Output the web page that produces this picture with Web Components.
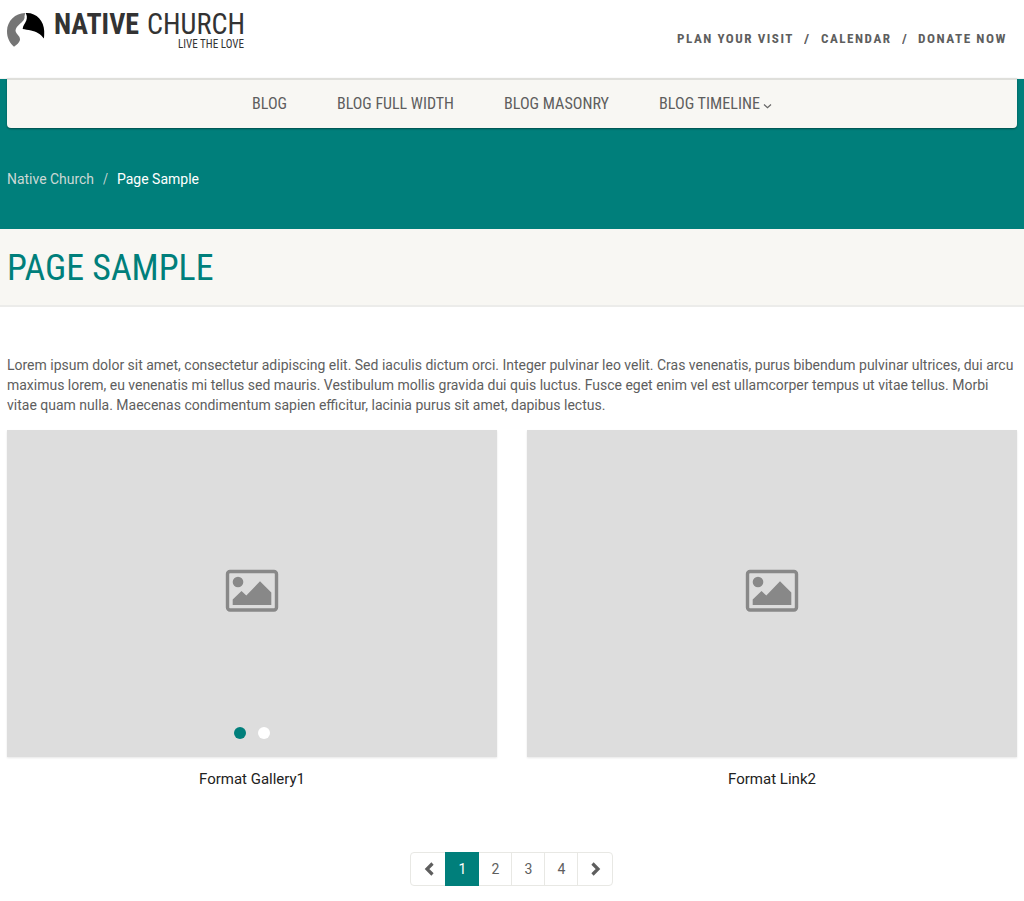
<!DOCTYPE html>
<html lang="en">
<head>
<meta charset="utf-8">
<title>Native Church</title>
<style>
body { margin: 0; background: #fff; color: #5e5e5e; font: 14px/20px Roboto, "Liberation Sans", sans-serif; overflow: hidden; }
</style>
</head>
<body>
<church-page></church-page>
<script>
function define(name, html, setup) {
  const template = document.createElement('template');
  template.innerHTML = html;
  customElements.define(name, class extends HTMLElement {
    connectedCallback() {
      if (this.shadowRoot) return;
      this.attachShadow({ mode: 'open' }).append(template.content.cloneNode(true));
      if (setup) setup(this, this.shadowRoot);
    }
  });
}

/* A single line whose glyphs are condensed to the width given in "w". */
define('fit-text', `
<style>
:host { display: block; flex: none; white-space: nowrap; }
span { display: inline-block; transform-origin: 0 50%; }
</style><span><slot></slot></span>`, (el, root) => {
  const span = root.querySelector('span');
  const w = +el.getAttribute('w');
  el.style.width = w + 'px';
  span.style.transform = 'scaleX(' + w / span.getBoundingClientRect().width + ')';
});

define('site-logo', `
<style>
:host { display: flex; color: #333; font-family: "Roboto Condensed", Roboto, sans-serif; }
svg { display: block; margin: 12px 9px 0 6px; }
.row { display: flex; gap: 8px; margin-top: 9px; height: 30px; font-size: 29px; line-height: 30px; }
.bold { font-weight: 700; }
.light { font-weight: 400; }
.tag { margin: 0 0 0 124px; font-size: 12px; line-height: 10px; }
</style>
<svg width="39" height="36" viewBox="0 0 39 36">
<path fill="#757575" d="M18.800 1C9.500 1.200 1.200 8.800 1 19C.9 26 3.800 31 8 34.800C10.500 33 13.500 30.500 14 28C14 26.500 13.800 25.500 13.300 24.700C11.500 22.500 9.500 20.500 9.500 18.500C9.700 16 11.500 14 14 11.800C16.500 9.800 19 7 18.500 5C18.300 3.500 19.500 2 18.800 1Z"/>
<path fill="#000" d="M19.600 1C30 .2 38 8.500 38.200 19C38.200 22 38.300 24.500 37.800 26.500C35 22 30 19.500 25 18.500C22 17.800 19 17.500 16.700 17C16.700 14 19 11.500 20.300 8.500C21.300 5.800 21 3 19.600 1Z"/>
</svg>
<div><div class="row"><fit-text class="bold" w="85">NATIVE</fit-text><fit-text class="light" w="98">CHURCH</fit-text></div>
<div class="tag"><fit-text w="66">LIVE THE LOVE</fit-text></div></div>`);

define('top-links', `
<style>
:host { display: flex; margin: 29px 17px 0 0; font: 700 13px/20px "Roboto Condensed", Roboto, sans-serif; letter-spacing: 1.5px; }
.sep { margin: 0 10px; }
</style>
<fit-text w="117">PLAN YOUR VISIT</fit-text><fit-text class="sep" w="7">/</fit-text>
<fit-text w="70.5">CALENDAR</fit-text><fit-text class="sep" w="6.5">/</fit-text>
<fit-text w="89">DONATE NOW</fit-text>`);

define('site-header', `
<style>
:host { display: flex; justify-content: space-between; box-sizing: border-box; height: 79px; background: #fff; border-bottom: 1px solid #f3f3f3; }
</style><slot></slot>`);

define('main-nav', `
<style>
:host { display: flex; justify-content: center; gap: 50px; box-sizing: border-box; height: 50px; margin: -1px 7px 0; padding: 12px 1px 0 0;
 border-top: 2px solid #dfdfdb; border-radius: 0 0 4px 4px; background: #f8f7f3; box-shadow: 0 1px 2px rgba(0,0,0,.4);
 font: 400 16px/24px "Roboto Condensed", Roboto, sans-serif; position: relative; }
.more { display: flex; gap: 3px; }
svg { margin-top: 11px; }
</style>
<fit-text w="35">BLOG</fit-text><fit-text w="117">BLOG FULL WIDTH</fit-text><fit-text w="105">BLOG MASONRY</fit-text>
<div class="more"><fit-text w="101">BLOG TIMELINE</fit-text><svg width="9" height="7"><path d="M1 1.500L4.500 4.800L8 1.500" fill="none" stroke="#666" stroke-width="1.200"/></svg></div>`);

define('hero-banner', `
<style>
:host { display: flow-root; height: 150px; background: #007f7b; }
nav { display: flex; margin: 41px 0 0 7px; color: #ccd8d5; }
.sep { margin: 0 9px 0 8.500px; }
.here { color: #fff; }
</style>
<main-nav></main-nav>
<nav><fit-text w="87">Native Church</fit-text><fit-text class="sep" w="5">/</fit-text><fit-text class="here" w="82">Page Sample</fit-text></nav>`);

define('page-title', `
<style>
:host { display: block; box-sizing: border-box; height: 78px; padding: 19px 7px 0; border-bottom: 2px solid #ececea; background: #f8f7f3;
 color: #007f7b; font: 400 36px/40px "Roboto Condensed", Roboto, sans-serif; }
</style><fit-text w="206.5"><slot></slot></fit-text>`);

define('media-card', `
<style>
:host { display: block; }
.pic { display: flex; flex-direction: column; align-items: center; box-sizing: border-box; height: 327px; padding-top: 139px; background: #ddd; box-shadow: 0 1px 2px rgba(0,0,0,.1); }
.dots { display: none; gap: 12px; margin-top: 114px; }
:host([gallery]) .dots { display: flex; }
i { width: 12px; height: 12px; border-radius: 50%; background: #fff; }
i:first-child { background: #007f7b; }
.cap { display: flex; justify-content: center; margin-top: 12px; color: #222; font-size: 15px; }
</style>
<div class="pic"><svg width="54" height="44" viewBox="0 0 54 44" fill="#888">
<rect x="2.500" y="2.500" width="49" height="38.500" rx="2.500" fill="none" stroke="#888" stroke-width="3.400"/>
<circle cx="13" cy="13" r="5.300"/><path d="M7.700 36V30.500L16.500 22L21.300 26.500L35 12.200L46.300 23.500V36Z"/></svg>
<div class="dots"><i></i><i></i></div></div>
<div class="cap"><slot></slot></div>`);

define('page-pager', `
<style>
:host { display: flex; box-sizing: border-box; width: 203px; height: 34px; margin: 63px 0 0 410px; border: 1px solid #e8e8e4; border-radius: 4px; }
span { display: flex; flex: none; align-items: center; justify-content: center; box-sizing: border-box; width: 33px; padding-left: 1px; border-right: 1px solid #e8e8e4; }
.prev, .next, .on { border: 0; width: 34px; }
.on { margin: -1px 0; background: #007f7b; color: #fff; }
svg { display: block; }
</style>
<span class="prev"><svg width="12" height="14"><path d="M9.500 1.500L4 7L9.500 12.500" fill="none" stroke="#5e5e5e" stroke-width="3.200"/></svg></span><span class="on">1</span><span>2</span><span>3</span><span>4</span>
<span class="next"><svg width="12" height="14"><path d="M2.500 1.500L8 7L2.500 12.500" fill="none" stroke="#5e5e5e" stroke-width="3.200"/></svg></span>`);

define('church-page', `
<style>
:host { display: block; height: 901px; overflow: hidden; }
.copy { margin: 48px 7px 15px; }
.cards { display: grid; grid-template-columns: 490px 490px; gap: 30px; margin: 0 7px; }
</style>
<site-header><site-logo></site-logo><top-links></top-links></site-header>
<hero-banner></hero-banner>
<page-title>PAGE SAMPLE</page-title>
<div class="copy">
<fit-text w="1006.4">Lorem ipsum dolor sit amet, consectetur adipiscing elit. Sed iaculis dictum orci. Integer pulvinar leo velit. Cras venenatis, purus bibendum pulvinar ultrices, dui arcu</fit-text>
<fit-text w="981.4">maximus lorem, eu venenatis mi tellus sed mauris. Vestibulum mollis gravida dui quis luctus. Fusce eget enim vel est ullamcorper tempus ut vitae tellus. Morbi</fit-text>
<fit-text w="598.4">vitae quam nulla. Maecenas condimentum sapien efficitur, lacinia purus sit amet, dapibus lectus.</fit-text>
</div>
<div class="cards"><media-card gallery><fit-text w="106">Format Gallery1</fit-text></media-card><media-card><fit-text w="88">Format Link2</fit-text></media-card></div>
<page-pager></page-pager>`);
</script>
</body>
</html>
